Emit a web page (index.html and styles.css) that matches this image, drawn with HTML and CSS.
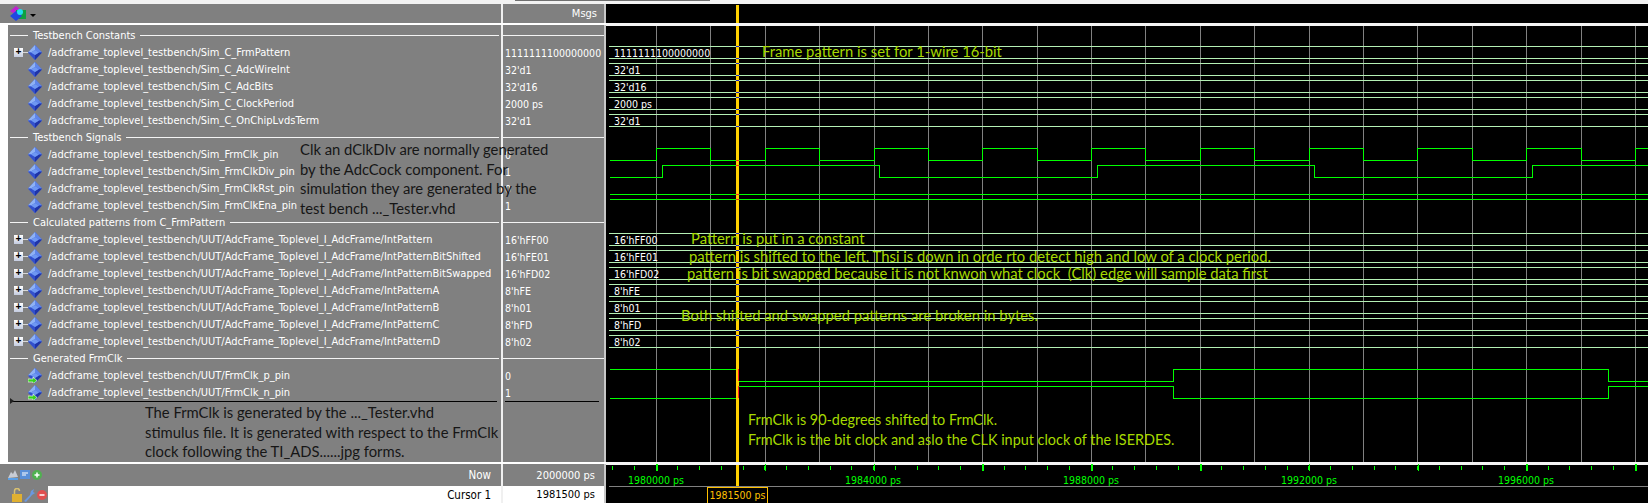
FILE: index.html
```html
<!doctype html>
<html lang="en">
  <head>
    <meta charset="UTF-8" />
    <title>Wave - Default</title>
    <link rel="stylesheet" href="styles.css">
  </head>
  <body>
    <!-- shared icons -->
    <svg class="defs" width="0" height="0">
      <symbol id="dia" viewBox="0 0 14 15">
        <polygon points="7,0 14,7.5 7,15 0,7.5" fill="#3f63dc"/>
        <polygon points="7,0 7,5 3,7.5 0,7.5" fill="#8fb2f4"/>
        <polygon points="7,0 14,7.5 11,7.5 7,5" fill="#5f86ea"/>
        <polygon points="14,7.5 7,15 7,10 11,7.5" fill="#1f34a8"/>
        <polygon points="0,7.5 7,15 7,10 3,7.5" fill="#3350cc"/>
        <polygon points="7,5 11,7.5 7,10 3,7.5" fill="#6f98f2"/>
      </symbol>
      <symbol id="dia-out" viewBox="0 0 14 15">
        <use href="#dia" width="14" height="15"/>
        <path d="M0 11h5v-2l4 3.5-4 3.5v-2H0z" fill="#38d020" stroke="#fff" stroke-width=".6"/>
      </symbol>
    </svg>

    <div class="topstrip"><span class="topline"></span></div>

    <div class="viewer">
      <!-- header row -->
      <div class="head head-names">
        <svg class="tool-icon" width="17" height="15" viewBox="0 0 17 15">
          <polygon points="6,0 12,5 6,9 0,5" fill="#c020d0"/>
          <rect x="6" y="4" width="10" height="9" fill="#10a040"/>
          <polygon points="6,5 12,10 6,15 0,10" fill="#2048e0"/>
          <circle cx="10" cy="6" r="3" fill="#20e0f0"/>
        </svg>
        <span class="drop"></span>
      </div>
      <div class="head head-values">Msgs</div>

      <!-- signal names -->
      <div class="names">
        <div class="group"><span>Testbench Constants</span></div>
        <div class="row"><i class="tree plus"></i><svg class="dia"><use href="#dia"/></svg>/adcframe_toplevel_testbench/Sim_C_FrmPattern</div>
        <div class="row"><i class="tree"></i><svg class="dia"><use href="#dia"/></svg>/adcframe_toplevel_testbench/Sim_C_AdcWireInt</div>
        <div class="row"><i class="tree"></i><svg class="dia"><use href="#dia"/></svg>/adcframe_toplevel_testbench/Sim_C_AdcBits</div>
        <div class="row"><i class="tree"></i><svg class="dia"><use href="#dia"/></svg>/adcframe_toplevel_testbench/Sim_C_ClockPeriod</div>
        <div class="row"><i class="tree"></i><svg class="dia"><use href="#dia"/></svg>/adcframe_toplevel_testbench/Sim_C_OnChipLvdsTerm</div>
        <div class="group"><span>Testbench Signals</span></div>
        <div class="row"><i class="tree"></i><svg class="dia"><use href="#dia"/></svg>/adcframe_toplevel_testbench/Sim_FrmClk_pin</div>
        <div class="row"><i class="tree"></i><svg class="dia"><use href="#dia"/></svg>/adcframe_toplevel_testbench/Sim_FrmClkDiv_pin</div>
        <div class="row"><i class="tree"></i><svg class="dia"><use href="#dia"/></svg>/adcframe_toplevel_testbench/Sim_FrmClkRst_pin</div>
        <div class="row"><i class="tree"></i><svg class="dia"><use href="#dia"/></svg>/adcframe_toplevel_testbench/Sim_FrmClkEna_pin</div>
        <div class="group"><span>Calculated patterns from C_FrmPattern</span></div>
        <div class="row"><i class="tree plus"></i><svg class="dia"><use href="#dia"/></svg>/adcframe_toplevel_testbench/UUT/AdcFrame_Toplevel_I_AdcFrame/IntPattern</div>
        <div class="row"><i class="tree plus"></i><svg class="dia"><use href="#dia"/></svg>/adcframe_toplevel_testbench/UUT/AdcFrame_Toplevel_I_AdcFrame/IntPatternBitShifted</div>
        <div class="row"><i class="tree plus"></i><svg class="dia"><use href="#dia"/></svg>/adcframe_toplevel_testbench/UUT/AdcFrame_Toplevel_I_AdcFrame/IntPatternBitSwapped</div>
        <div class="row"><i class="tree plus"></i><svg class="dia"><use href="#dia"/></svg>/adcframe_toplevel_testbench/UUT/AdcFrame_Toplevel_I_AdcFrame/IntPatternA</div>
        <div class="row"><i class="tree plus"></i><svg class="dia"><use href="#dia"/></svg>/adcframe_toplevel_testbench/UUT/AdcFrame_Toplevel_I_AdcFrame/IntPatternB</div>
        <div class="row"><i class="tree plus"></i><svg class="dia"><use href="#dia"/></svg>/adcframe_toplevel_testbench/UUT/AdcFrame_Toplevel_I_AdcFrame/IntPatternC</div>
        <div class="row"><i class="tree plus"></i><svg class="dia"><use href="#dia"/></svg>/adcframe_toplevel_testbench/UUT/AdcFrame_Toplevel_I_AdcFrame/IntPatternD</div>
        <div class="group"><span>Generated FrmClk</span></div>
        <div class="row"><i class="tree"></i><svg class="dia"><use href="#dia-out"/></svg>/adcframe_toplevel_testbench/UUT/FrmClk_p_pin</div>
        <div class="row"><i class="tree"></i><svg class="dia"><use href="#dia-out"/></svg>/adcframe_toplevel_testbench/UUT/FrmClk_n_pin</div>
        <div class="end-line"></div>
        <p class="note note-bottom">The FrmClk is generated by the ..._Tester.vhd<br>stimulus file. It is generated with respect to the FrmClk<br>clock following the TI_ADS......jpg forms.</p>
      </div>

      <!-- values -->
      <div class="values">
        <div class="group"></div>
        <div class="row">1111111100000000</div>
        <div class="row">32'd1</div>
        <div class="row">32'd16</div>
        <div class="row">2000 ps</div>
        <div class="row">32'd1</div>
        <div class="group"></div>
        <div class="row">0</div>
        <div class="row">1</div>
        <div class="row">0</div>
        <div class="row">1</div>
        <div class="group"></div>
        <div class="row">16'hFF00</div>
        <div class="row">16'hFE01</div>
        <div class="row">16'hFD02</div>
        <div class="row">8'hFE</div>
        <div class="row">8'h01</div>
        <div class="row">8'hFD</div>
        <div class="row">8'h02</div>
        <div class="group"></div>
        <div class="row">0</div>
        <div class="row">1</div>
        <div class="end-line"></div>
      </div>

      <!-- footer -->
      <div class="foot foot-names">
        <div class="foot-row">
          <svg class="foot-icons" width="36" height="12" viewBox="0 0 36 12">
            <path d="M0 9l3-6 2 2 2-4 3 7z" fill="#c8ccd4"/>
            <rect x="0" y="9" width="10" height="2" fill="#5aa0e8"/>
            <rect x="12" y="1" width="10" height="9" fill="#5a90d8"/>
            <path d="M14 4h6M14 6h4" stroke="#fff"/>
            <circle cx="29" cy="6" r="5" fill="#50b050"/>
            <path d="M26.500 6h5M29 3.500v5" stroke="#fff" stroke-width="1.500"/>
          </svg>
          <span class="foot-label">Now</span>
        </div>
        <div class="foot-row foot-cursor">
          <svg class="foot-icons lower" width="36" height="14" viewBox="0 0 36 14">
            <rect x="0" y="6" width="10" height="8" fill="#e0b030"/>
            <path d="M2.500 6V3a2.500 2.500 0 0 1 5 0" fill="none" stroke="#d8c070" stroke-width="1.500"/>
            <path d="M12 13l6-6 1-4 3-2-1 3 2 1-3 2-6 7z" fill="#6a98e0"/>
            <circle cx="30" cy="7" r="5" fill="#e05050"/>
            <path d="M27.500 7h5" stroke="#fff" stroke-width="1.500"/>
          </svg>
          <span class="foot-label">Cursor 1</span>
        </div>
      </div>
      <div class="foot foot-values">
        <div class="foot-row">2000000 ps</div>
        <div class="foot-row foot-cursor">1981500 ps</div>
      </div>

      <!-- wave window: coordinates in the viewBox are page pixels -->
      <svg class="wave" viewBox="606 4 1042 499" width="1042" height="499">
        <g class="grid">
          <path d="M656 26V462M710 26V462M765 26V462M819 26V462M874 26V462M928 26V462M982 26V462M1037 26V462M1091 26V462M1145 26V462M1200 26V462M1254 26V462M1309 26V462M1363 26V462M1417 26V462M1472 26V462M1526 26V462M1581 26V462M1635 26V462"/>
        </g>

        <path class="bus" d="M609 46H1648M609 58H1648M609 63H1648M609 75H1648M609 80H1648M609 92H1648M609 97H1648M609 109H1648M609 114H1648M609 126H1648"/>
        <path class="bus" d="M609 233H1648M609 245H1648M609 250H1648M609 262H1648M609 267H1648M609 279H1648M609 284H1648M609 296H1648M609 301H1648M609 313H1648M609 318H1648M609 330H1648M609 335H1648M609 347H1648"/>

        <path class="sig" d="M610 160H656V148H710V160H765V148H819V160H874V148H928V160H982V148H1037V160H1091V148H1145V160H1200V148H1254V160H1309V148H1363V160H1417V148H1472V160H1526V148H1581V160H1635V148H1648"/>
        <path class="sig" d="M610 177H662V165H879V177H1097V165H1314V177H1532V165H1648"/>
        <path class="sig" d="M610 194H1648M610 199H1648"/>
        <path class="sig" d="M610 369H738V381H1173V369H1608V381H1648"/>
        <path class="sig" d="M610 398H738V386H1173V398H1608V386H1648"/>

        <rect class="cursor" x="736" y="5" width="3" height="18"/>
        <rect class="cursor" x="736" y="26" width="3" height="460"/>
        <path class="hit-blue" d="M736 46h3M736 58h3M736 63h3M736 75h3M736 80h3M736 92h3M736 97h3M736 109h3M736 114h3M736 126h3M736 233h3M736 245h3M736 250h3M736 262h3M736 267h3M736 279h3M736 284h3M736 296h3M736 301h3M736 313h3M736 318h3M736 330h3M736 335h3M736 347h3"/>
        <path class="hit-red" d="M736 160h3M736 165h3M736 194h3M736 199h3M738 369V381M738 386V398"/>

        <g class="bus-val">
          <text x="614" y="57">1111111100000000</text>
          <text x="614" y="74">32'd1</text>
          <text x="614" y="91">32'd16</text>
          <text x="614" y="108">2000 ps</text>
          <text x="614" y="125">32'd1</text>
          <text x="614" y="244">16'hFF00</text>
          <text x="614" y="261">16'hFE01</text>
          <text x="614" y="278">16'hFD02</text>
          <text x="614" y="295">8'hFE</text>
          <text x="614" y="312">8'h01</text>
          <text x="614" y="329">8'hFD</text>
          <text x="614" y="346">8'h02</text>
        </g>

        <g class="anno">
          <text x="762" y="57">Frame pattern is set for 1-wire 16-bit</text>
          <text x="691" y="244">Pattern is put in a constant</text>
          <text x="689" y="262">pattern is shifted to the left. Thsi is down in orde rto detect high and low of a clock period.</text>
          <text x="687" y="279" xml:space="preserve">pattern is bit swapped because it is not knwon what clock  (Clk) edge will sample data first</text>
          <text x="681" y="321">Both shifted and swapped patterns are broken in bytes.</text>
          <text class="anno-low" x="748" y="425">FrmClk is 90-degrees shifted to FrmClk.</text>
          <text class="anno-low" x="748" y="445">FrmClk is the bit clock and aslo the CLK input clock of the ISERDES.</text>
        </g>

        <rect class="sep" x="606" y="23" width="1042" height="2.500"/>
        <rect class="sep" x="606" y="462" width="1042" height="2.500"/>

        <line class="tick" x1="612" y1="468" x2="1648" y2="468" stroke-dasharray="1 20.760"/>
        <line class="tick tick-major" x1="656" y1="467.500" x2="1648" y2="467.500" stroke-dasharray="1.500 107.300"/>
        <g class="time">
          <text x="656" y="484">1980000 ps</text>
          <text x="873" y="484">1984000 ps</text>
          <text x="1091" y="484">1988000 ps</text>
          <text x="1309" y="484">1992000 ps</text>
          <text x="1526" y="484">1996000 ps</text>
        </g>
        <line class="time-rule" x1="609" y1="486" x2="1648" y2="486"/>
        <rect class="cursor-box" x="707.500" y="487.500" width="60" height="17"/>
        <text class="cursor-label" x="737.500" y="499">1981500 ps</text>
      </svg>

      <p class="note note-top">Clk an dClkDIv are normally generated<br>by the AdcCock component. For<br>simulation they are generated by the<br>test bench ..._Tester.vhd</p>
    </div>
  </body>
</html>
```

FILE: styles.css
```css
body {
  margin: 0;
  width: 1648px;
  height: 503px;
  overflow: hidden;
  background-color: white;
  font-family: "DejaVu Sans Condensed", "DejaVu Sans", sans-serif;
  font-size: 10.5px;
  color: white;
}

.defs { position: absolute; }

.topstrip {
  height: 4px;
  background-color: #f2f2f2;
}
.topline {
  display: block;
  width: 195px;
  height: 1px;
  margin-left: 515px;
  background-color: #707070;
}

.viewer {
  position: relative;
  display: grid;
  grid-template-columns: 503px 103px 1042px;
  grid-template-rows: 19px 2px 437px 2px 39px;
  height: 499px;
}

/* --- Header --- */
.head {
  grid-row: 1;
  display: flex;
  align-items: center;
  background-color: #808080;
  font-size: 11px;
}
.head-names {
  grid-column: 1;
  padding-left: 10px;
  border-right: 2px solid #f0f0f0;
}
.head-values {
  grid-column: 2;
  justify-content: flex-end;
  padding-right: 7px;
  border-right: 2px solid #c8c8c8;
}
.tool-icon { display: block; }
.drop {
  width: 0;
  height: 0;
  margin: 3px 0 0 3px;
  border-left: 3px solid transparent;
  border-right: 3px solid transparent;
  border-top: 3px solid black;
}

/* --- Names and values --- */
.names,
.values {
  grid-row: 3;
  padding-top: 2px;
  background-color: #808080;
  overflow: hidden;
}
.names {
  grid-column: 1;
  position: relative;
  border-left: 8px solid white;
  border-right: 2px solid #f0f0f0;
  font-size: 11px;
}
.values {
  grid-column: 2;
  border-right: 2px solid #c8c8c8;
}

.row {
  display: flex;
  align-items: center;
  height: 17px;
  white-space: nowrap;
}
.names .row { padding-left: 6px; }
.values .row { padding-left: 2px; }

.group {
  display: flex;
  align-items: center;
  height: 17px;
}
.group::before,
.group::after {
  content: "";
  height: 1px;
  background-color: #f4f4f4;
}
.names .group { padding-left: 2px; }
.names .group::before { width: 18px; margin-right: 5px; }
.names .group::after { flex: 1; margin-left: 5px; margin-right: 2px; }
.values .group::after { flex: 1; }

.tree {
  position: relative;
  display: block;
  width: 14px;
  height: 9px;
}
.plus::before {
  content: "+";
  position: absolute;
  left: 0;
  top: 0;
  width: 9px;
  height: 9px;
  background: linear-gradient(#ffffff, #c4cce0);
  color: black;
  font: bold 10px/9px "Liberation Mono", monospace;
  text-align: center;
}
.plus::after {
  content: "";
  position: absolute;
  left: 9px;
  top: 4px;
  width: 5px;
  height: 1px;
  background-color: #d8d8d8;
}
.dia {
  flex: none;
  width: 14px;
  height: 15px;
  margin-right: 6px;
}

.end-line {
  position: relative;
  height: 1px;
  background-color: black;
}
.names .end-line { margin: 0 4px 0 3px; }
.values .end-line { margin: 0 5px 0 2px; }
.names .end-line::before {
  content: "";
  position: absolute;
  left: -1px;
  top: -3px;
  border-left: 4px solid #202020;
  border-top: 3.5px solid transparent;
  border-bottom: 3.5px solid transparent;
}

/* pasted on top of the screenshot */
.note {
  margin: 0;
  color: #161616;
  font-family: Lato, sans-serif;
  font-size: 14.8px;
  line-height: 19.5px;
  white-space: nowrap;
}
.note-top {
  position: absolute;
  left: 300px;
  top: 136px;
}
.note-bottom {
  padding: 1px 0 0 137px;
}

/* --- Footer --- */
.foot {
  grid-row: 5;
  background-color: #808080;
  font-size: 11px;
}
.foot-names {
  grid-column: 1;
  border-right: 2px solid #f0f0f0;
  font-size: 11.5px;
}
.foot-values {
  grid-column: 2;
  border-right: 2px solid #c8c8c8;
}
.foot-row {
  display: flex;
  align-items: center;
  height: 22px;
}
.foot-cursor {
  height: 17px;
  background-color: white;
  color: black;
}
.foot-names .foot-row {
  justify-content: space-between;
  padding: 0 10px 0 8px;
}
.foot-names .foot-cursor {
  padding-left: 12px;
  background: linear-gradient(to right, #808080 48px, white 48px);
}
.foot-values .foot-row {
  justify-content: flex-end;
  padding-right: 9px;
}

/* --- Wave window --- */
.wave {
  grid-column: 3;
  grid-row: 1 / -1;
  display: block;
  background-color: black;
  shape-rendering: crispEdges;
}
.wave text {
  shape-rendering: auto;
  font-size: 10.5px;
}
.grid path { stroke: #808080; fill: none; }
.bus { stroke: #b4f0b4; fill: none; }
.sig { stroke: #00ff00; fill: none; }
.cursor { fill: #ffd000; }
.hit-blue { stroke: #2020c0; fill: none; }
.hit-red { stroke: #ff2020; fill: none; }
.bus-val text { fill: white; }
.wave .anno text {
  fill: #a6da00;
  font-family: Lato, sans-serif;
  font-size: 14.8px;
}
.wave .anno .anno-low { font-size: 14.4px; }
.sep { fill: #f4f4f4; }
.tick { stroke: #00ff00; stroke-width: 4px; }
.tick-major { stroke-width: 7px; }
.time text {
  fill: #00ff00;
  text-anchor: middle;
}
.time-rule { stroke: #808080; }
.cursor-box { fill: black; stroke: #ffc000; }
.wave .cursor-label {
  fill: #ffc000;
  text-anchor: middle;
}
```
